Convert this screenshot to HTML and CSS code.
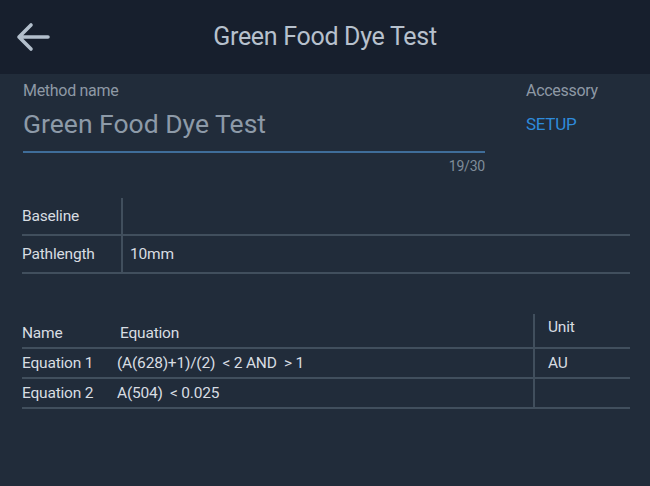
FILE: index.html
```html
<!DOCTYPE html>
<html lang="en">
<head>
  <meta charset="UTF-8" />
  <meta name="viewport" content="width=device-width, initial-scale=1.0" />
  <title>Green Food Dye Test</title>
  <link rel="stylesheet" href="styles.css">
</head>
<body>
  <div class="topbar">
    <button class="back" aria-label="Back">
      <svg width="34" height="30" viewBox="0 0 34 30">
        <path d="M15 3 L3 15 L15 27 M3 15 H32" fill="none" stroke="#b3bfcc" stroke-width="3.6" stroke-linecap="round" stroke-linejoin="round"/>
      </svg>
    </button>
    <div class="title">Green Food Dye Test</div>
    <div></div>
  </div>

  <div class="content">
    <div class="form-row">
      <div class="field">
        <div class="label">Method name</div>
        <div class="input">Green Food Dye Test</div>
        <div class="counter">19/30</div>
      </div>
      <div class="accessory">
        <div class="label">Accessory</div>
        <div class="setup">SETUP</div>
      </div>
    </div>

    <div class="grid params">
      <div class="cell key">Baseline</div>
      <div class="cell val"></div>
      <div class="cell key">Pathlength</div>
      <div class="cell val">10mm</div>
    </div>

    <div class="grid equations">
      <div class="cell head">Name</div>
      <div class="cell head eq-head">Equation</div>
      <div class="cell head unit">Unit</div>
      <div class="cell">Equation 1</div>
      <div class="cell">(A(628)+1)/(2) &nbsp;&lt; 2 AND &nbsp;&gt; 1</div>
      <div class="cell unit">AU</div>
      <div class="cell">Equation 2</div>
      <div class="cell">A(504) &nbsp;&lt; 0.025</div>
      <div class="cell unit"></div>
    </div>
  </div>
</body>
</html>
```

FILE: styles.css
```css
body {
  margin: 0;
  width: 650px;
  height: 486px;
  background: #212c3a;
  font-family: Roboto, "Noto Sans", Arial, sans-serif;
  color: #d8dde2;
  overflow: hidden;
}
.topbar {
  height: 74px;
  background: #171f2d;
  display: grid;
  grid-template-columns: 1fr auto 1fr;
  align-items: center;
}
.back {
  background: none;
  border: none;
  padding: 0 0 0 16px;
  display: flex;
  align-items: center;
  justify-self: start;
  cursor: pointer;
}
.title {
  font-size: 25px;
  color: #b7c1cd;
  letter-spacing: -0.3px;
  padding-bottom: 1px;
}
.content {
  padding: 0 20px 0 22px;
}
.form-row {
  display: flex;
  padding-top: 7px;
}
.field {
  width: 462px;
  padding-left: 1px;
}
.label {
  font-size: 16px;
  line-height: 20px;
  color: #8e99a5;
  letter-spacing: -0.3px;
}
.input {
  margin-top: 7px;
  font-size: 26.5px;
  line-height: 32px;
  color: #8d9aa8;
  padding-bottom: 11px;
  border-bottom: 2px solid #3f6d99;
}
.counter {
  text-align: right;
  font-size: 14px;
  line-height: 18px;
  margin-top: 4px;
  color: #7f8c99;
  letter-spacing: -0.2px;
}
.accessory {
  margin-left: 41px;
}
.setup {
  margin-top: 12px;
  font-size: 17px;
  line-height: 22px;
  color: #2e8bdb;
  letter-spacing: -0.3px;
}
.grid {
  display: grid;
  font-size: 15.5px;
  letter-spacing: -0.2px;
}
.params {
  margin-top: 23px;
  grid-template-columns: 99px 1fr;
}
.params .cell {
  height: 36px;
  display: flex;
  align-items: center;
  border-bottom: 2px solid #414f5d;
}
.params .val {
  border-left: 2px solid #414f5d;
  padding-left: 7px;
}
.equations {
  margin-top: 40px;
  grid-template-columns: 95px 416px 1fr;
}
.equations .cell {
  height: 28px;
  display: flex;
  align-items: center;
  border-bottom: 2px solid #414f5d;
}
.equations .head {
  box-sizing: border-box;
  height: 35px;
  align-items: flex-end;
  padding-bottom: 5px;
}
.equations .eq-head {
  padding-left: 3px;
}
.equations .unit {
  border-left: 2px solid #414f5d;
  padding-left: 13px;
}
.equations .head.unit {
  align-items: center;
  padding-bottom: 8px;
}
```
